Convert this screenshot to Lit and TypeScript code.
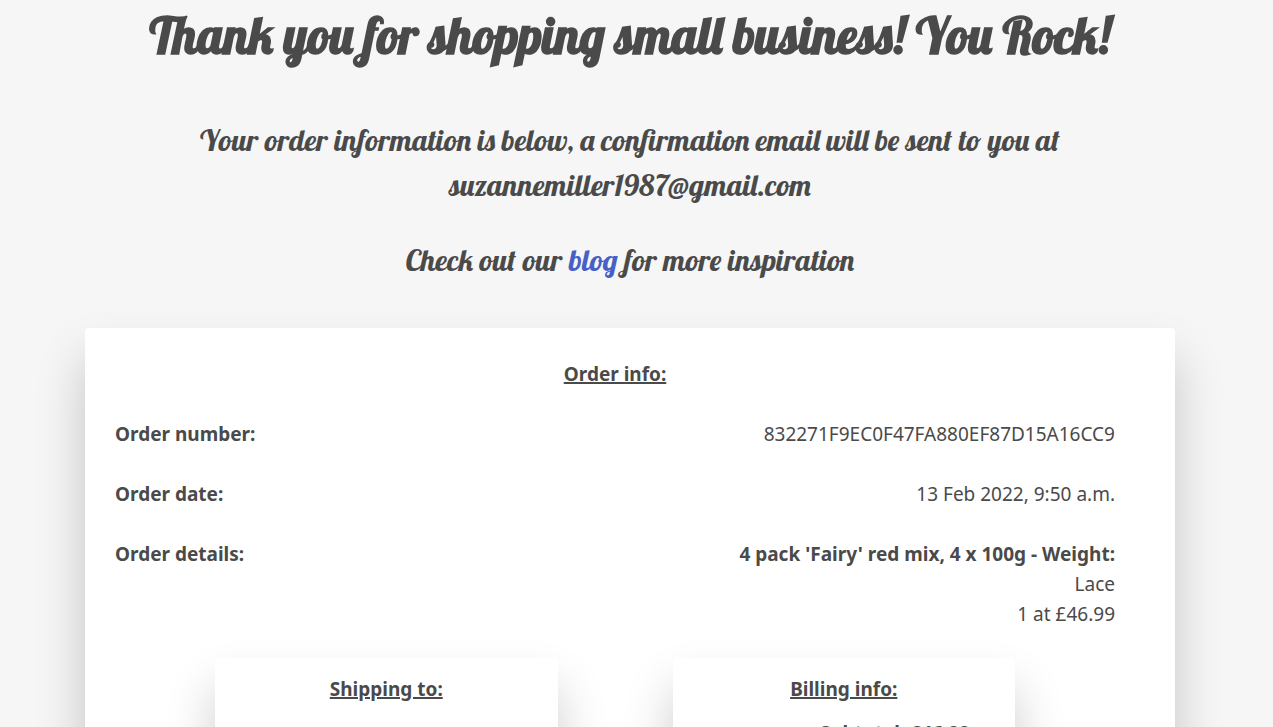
import { LitElement, html, css } from "lit";
import { customElement, property } from "lit/decorators.js";

interface OrderRow {
  label: string;
  lines: { text: string; strong?: boolean }[];
}

@customElement("order-rows")
class OrderRows extends LitElement {
  @property({ attribute: false }) rows: OrderRow[] = [];

  static styles = css`
    :host { display: block; }
    .list { margin: 0; display: grid; gap: 30px; }
    .row { display: flex; justify-content: space-between; gap: 24px; }
    .label { font-weight: 700; }
    .value { margin: 0; text-align: right; font-weight: 400; overflow-wrap: anywhere; }
    .line { display: block; }
    .strong { font-weight: 700; }
  `;

  render() {
    return html`<dl class="list">
      ${this.rows.map(
        (row) => html`<div class="row">
          <dt class="label">${row.label}</dt>
          <dd class="value">
            ${row.lines.map((l) => html`<span class="line ${l.strong ? "strong" : ""}">${l.text}</span>`)}
          </dd>
        </div>`
      )}
    </dl>`;
  }
}

@customElement("app-root")
class AppRoot extends LitElement {
  static styles = css`
    :host {
      display: block;
      box-sizing: border-box;
      height: 100vh;
      overflow: hidden;
      padding-right: 13px;
      background: #f6f6f6;
      color: #4a4a4a;
      font: 400 19px/30px "Noto Sans", "Open Sans", sans-serif;
    }
    .page { max-width: 1090px; margin: 0 auto; padding: 0 24px; }
    .script { font-family: Lobster, "Liberation Serif", serif; text-align: center; }
    .title { margin: 0; font-size: 50px; line-height: 72px; font-weight: 700; }
    .lead { margin: 46px 0 0; font-size: 30px; line-height: 45px; }
    .more { margin: 30px 0 0; font-size: 30px; line-height: 45px; }
    .link { color: #485fc7; text-decoration: none; }
    .card { background: #fff; border-radius: 4px; box-shadow: 0 30px 50px rgba(0, 0, 0, 0.2); }
    .order { margin-top: 45px; padding: 31px 60px 60px 30px; }
    .heading { margin: 0; font-size: 19px; line-height: 30px; font-weight: 700; text-align: center; text-decoration: underline; text-decoration-thickness: 2px; }
    .rows { margin-top: 30px; }
    .panels { display: grid; grid-template-columns: 1fr 1fr; gap: 115px; margin-top: 29px; padding: 0 10%; }
    .panel { padding: 16px; }
    .text { margin: 14px 0 0; padding-right: 29px; text-align: right; font-weight: 700; }
  `;

  private rows: OrderRow[] = [
    { label: "Order number:", lines: [{ text: "832271F9EC0F47FA880EF87D15A16CC9" }] },
    { label: "Order date:", lines: [{ text: "13 Feb 2022, 9:50 a.m." }] },
    {
      label: "Order details:",
      lines: [
        { text: "4 pack 'Fairy' red mix, 4 x 100g - Weight:", strong: true },
        { text: "Lace" },
        { text: "1 at £46.99" },
      ],
    },
  ];

  render() {
    return html`<main class="page">
      <h1 class="script title">Thank you for shopping small business! You Rock!</h1>
      <p class="script lead">
        Your order information is below, a confirmation email will be sent to you at<br />
        suzannemiller1987@gmail.com
      </p>
      <p class="script more">Check out our <a class="link" href="#blog">blog</a> for more inspiration</p>
      <section class="card order">
        <h2 class="heading">Order info:</h2>
        <order-rows class="rows" .rows=${this.rows}></order-rows>
        <div class="panels">
          <section class="card panel"><h3 class="heading">Shipping to:</h3></section>
          <section class="card panel">
            <h3 class="heading">Billing info:</h3>
            <p class="text">Subtotal: £46.99</p>
          </section>
        </div>
      </section>
    </main>`;
  }
}
